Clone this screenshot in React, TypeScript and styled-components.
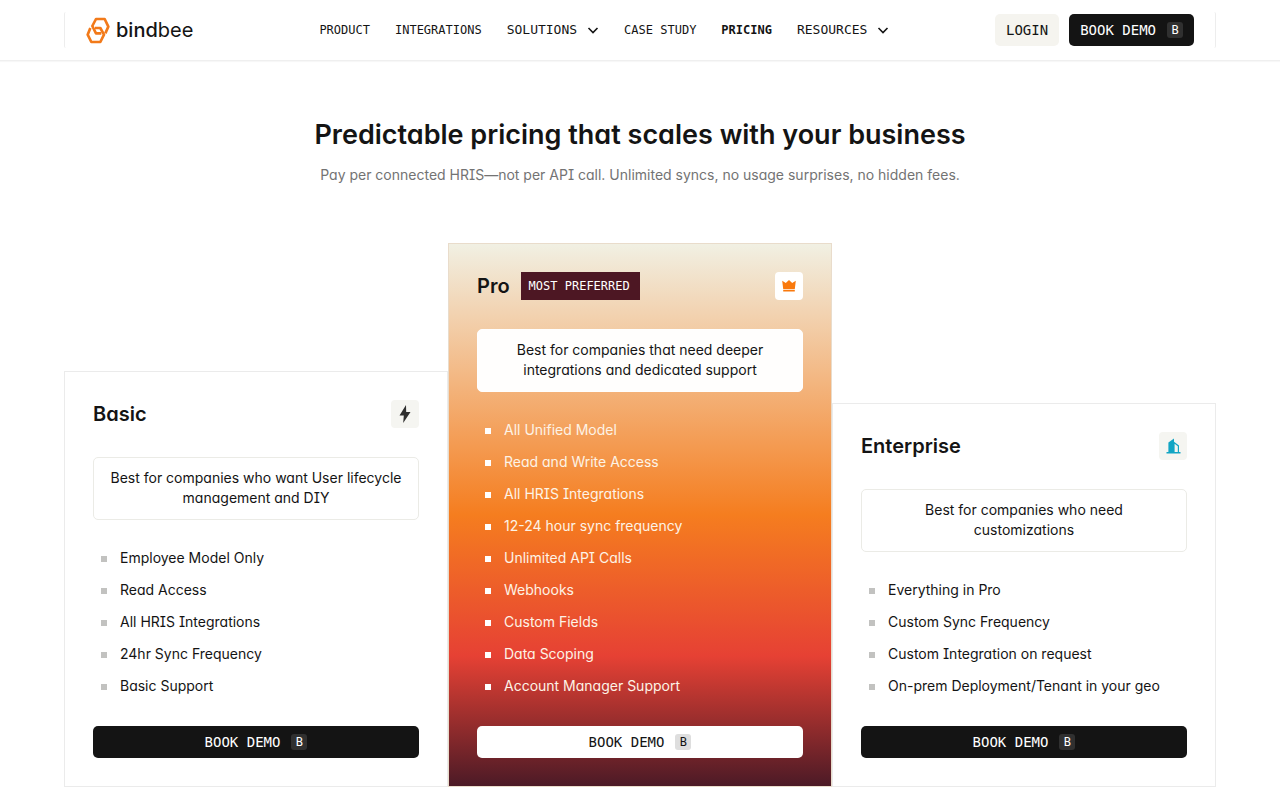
import React from "react";
import styled, { createGlobalStyle } from "styled-components";

const sans = `Inter, "Liberation Sans", sans-serif`;
const mono = `"DejaVu Sans Mono", "Liberation Mono", monospace`;

const GlobalStyle = createGlobalStyle`
  *, *::before, *::after { box-sizing: border-box; }
  body {
    margin: 0;
    background: #fff;
    color: #141414;
    font-family: ${sans};
    font-size: 14px;
    line-height: 20px;
    font-feature-settings: "cv11" 1, "cv08" 1;
  }
  h1, h2, p, ul { margin: 0; padding: 0; }
  a { color: inherit; text-decoration: none; }
  button { font: inherit; color: inherit; border: 0; background: none; padding: 0; cursor: pointer; }
`;

const Header = styled.header`
  padding: 12px 64px;
  background: #fff;
  border-bottom: 1px solid #efefef;
  box-shadow: 0 1px 1px #f7f7f7;
`;

const HeaderInner = styled.div`
  display: flex;
  align-items: center;
  height: 36px;
  padding: 0 21px;
  border: solid #ededed;
  border-width: 0 1px;
  border-radius: 2px;
`;

const Logo = styled.a`
  display: flex;
  align-items: center;
  gap: 6px;
  margin-right: 126px;
  font-size: 20px;
  line-height: 28px;
`;

const WordStrong = styled.span`
  font-weight: 500;
`;

const Nav = styled.nav`
  display: flex;
  align-items: center;
  gap: 25px;
  font-family: ${mono};
  font-size: 12px;
`;

const NavLink = styled.a<{ $active?: boolean }>`
  font-weight: ${(p) => (p.$active ? 700 : 400)};
`;

const NavMenu = styled.button`
  display: flex;
  align-items: center;
  gap: 10px;
  font-size: 13px;
`;

const Actions = styled.div`
  display: flex;
  gap: 10px;
  margin-left: auto;
`;

const Button = styled.button<{ $tone: "dark" | "light" | "soft"; $wide?: boolean }>`
  display: flex;
  align-items: center;
  justify-content: center;
  gap: 11px;
  width: ${(p) => (p.$wide ? "100%" : "auto")};
  height: 32px;
  padding: 0 11px;
  border-radius: 5px;
  font-family: ${mono};
  font-size: 14px;
  color: ${(p) => (p.$tone === "dark" ? "#fff" : "#141414")};
  background: ${(p) => ({ dark: "#141414", light: "#fff", soft: "#f5f4ef" })[p.$tone]};
`;

const Key = styled.kbd<{ $light?: boolean }>`
  width: 16px;
  border-radius: 3px;
  font-family: ${mono};
  font-size: 12px;
  line-height: 16px;
  text-align: center;
  background: ${(p) => (p.$light ? "#dedede" : "#303030")};
`;

const Main = styled.main`
  padding: 54px 64px 13px;
`;

const Intro = styled.section`
  text-align: center;
`;

const Title = styled.h1`
  font-size: 27px;
  line-height: 40px;
  font-weight: 600;
`;

const Subtitle = styled.p`
  margin-top: 10px;
  color: #737373;
`;

const Plans = styled.section`
  display: grid;
  grid-template-columns: repeat(3, 1fr);
  align-items: end;
  margin-top: 58px;
`;

const Card = styled.article<{ $featured?: boolean }>`
  padding: 28px;
  border: 1px solid ${(p) => (p.$featured ? "#e9dccb" : "#ebebeb")};
  color: ${(p) => (p.$featured ? "#fdf3e6" : "#141414")};
  background: ${(p) =>
    p.$featured
      ? "linear-gradient(180deg, #f1f0e3 0%, #f57d1f 50%, #e64134 76%, #4c1a26 100%)"
      : "#fff"};
`;

const CardHead = styled.div`
  display: flex;
  align-items: center;
  gap: 11px;
  height: 28px;
  color: #141414;
`;

const PlanName = styled.h2`
  font-size: 20px;
  line-height: 28px;
  font-weight: 600;
`;

const Tag = styled.span`
  padding: 0 10px 0 8px;
  font-family: ${mono};
  font-size: 12px;
  line-height: 28px;
  color: #fff;
  background: #4d1723;
`;

const IconTile = styled.span<{ $featured?: boolean }>`
  display: grid;
  place-items: center;
  width: 28px;
  height: 28px;
  margin-left: auto;
  border-radius: 4px;
  background: ${(p) => (p.$featured ? "#fff" : "#f5f5f1")};
`;

const BestFor = styled.p<{ $featured?: boolean }>`
  margin-top: 29px;
  padding: 10px 14px 11px;
  border: 1px solid ${(p) => (p.$featured ? "#fff" : "#ebebe6")};
  border-radius: 5px;
  color: #141414;
  background: ${(p) => (p.$featured ? "#fffefd" : "#fff")};
  text-align: center;
`;

const Features = styled.ul`
  margin: 22px 0 24px;
  list-style: none;
`;

const Feature = styled.li<{ $featured?: boolean }>`
  display: flex;
  align-items: center;
  gap: 13px;
  height: 32px;
  padding-left: 8px;

  &::before {
    content: "";
    width: 6px;
    height: 6px;
    margin-top: 2px;
    background: ${(p) => (p.$featured ? "#fff" : "#c2c2c0")};
  }
`;

const LogoMark = () => (
  <svg width="24" height="27" viewBox="0 0 72 81" fill="none" stroke="#f27a1a" strokeWidth="8" strokeLinejoin="round" aria-hidden="true">
    <path d="M58 49 L67 29 L56 6 H30 L19 27 L30 49 H46" />
    <path d="M13 33 L5 53 L16 75 H43 L54 53 L43 33 H27" />
  </svg>
);

const Chevron = () => (
  <svg width="12" height="12" viewBox="0 0 12 12" fill="none" stroke="#141414" strokeWidth="1.6" aria-hidden="true">
    <path d="M1.5 4 L6 8.5 L10.5 4" />
  </svg>
);

const Bolt = () => (
  <svg width="12" height="18" viewBox="0 0 12 18" fill="#2e2e2e" aria-hidden="true">
    <path d="M7 0 L0.5 10.5 H4.8 L4.2 18 L11.5 7 H7.2 Z" />
  </svg>
);

const Crown = () => (
  <svg width="14" height="12" viewBox="0 0 14 12" fill="#f9790d" aria-hidden="true">
    <path d="M0.2 0.8 L3.8 3 L7 0 L10.2 3 L13.8 0.8 L12.8 9 H1.2 Z M1.2 9.8 H12.8 V11.6 H1.2 Z" />
  </svg>
);

const Tower = () => (
  <svg width="15" height="16" viewBox="0 0 15 16" fill="#12a5c4" aria-hidden="true">
    <path d="M0.5 14 H2.4 V4.4 L8 0.4 V3.8 L13 7.6 V14 H14.5 V15.4 H0.5 Z M8.6 5.8 V14 H11.8 V8.2 Z" fillRule="evenodd" />
  </svg>
);

interface Plan {
  name: string;
  tag?: string;
  featured?: boolean;
  icon: React.ReactNode;
  bestFor: string;
  features: string[];
}

const plans: Plan[] = [
  {
    name: "Basic",
    icon: <Bolt />,
    bestFor: "Best for companies who want User lifecycle management and DIY",
    features: ["Employee Model Only", "Read Access", "All HRIS Integrations", "24hr Sync Frequency", "Basic Support"],
  },
  {
    name: "Pro",
    tag: "MOST PREFERRED",
    featured: true,
    icon: <Crown />,
    bestFor: "Best for companies that need deeper integrations and dedicated support",
    features: [
      "All Unified Model",
      "Read and Write Access",
      "All HRIS Integrations",
      "12-24 hour sync frequency",
      "Unlimited API Calls",
      "Webhooks",
      "Custom Fields",
      "Data Scoping",
      "Account Manager Support",
    ],
  },
  {
    name: "Enterprise",
    icon: <Tower />,
    bestFor: "Best for companies who need customizations",
    features: ["Everything in Pro", "Custom Sync Frequency", "Custom Integration on request", "On-prem Deployment/Tenant in your geo"],
  },
];

const PlanCard = ({ plan }: { plan: Plan }) => (
  <Card $featured={plan.featured}>
    <CardHead>
      <PlanName>{plan.name}</PlanName>
      {plan.tag && <Tag>{plan.tag}</Tag>}
      <IconTile $featured={plan.featured}>{plan.icon}</IconTile>
    </CardHead>
    <BestFor $featured={plan.featured}>{plan.bestFor}</BestFor>
    <Features>
      {plan.features.map((f) => (
        <Feature key={f} $featured={plan.featured}>{f}</Feature>
      ))}
    </Features>
    <Button $wide $tone={plan.featured ? "light" : "dark"}>
      BOOK DEMO <Key $light={plan.featured}>B</Key>
    </Button>
  </Card>
);

export default function App() {
  return (
    <>
      <GlobalStyle />
      <Header>
        <HeaderInner>
          <Logo href="#">
            <LogoMark />
            <span><WordStrong>bind</WordStrong>bee</span>
          </Logo>
          <Nav>
            <NavLink href="#">PRODUCT</NavLink>
            <NavLink href="#">INTEGRATIONS</NavLink>
            <NavMenu>SOLUTIONS <Chevron /></NavMenu>
            <NavLink href="#">CASE STUDY</NavLink>
            <NavLink href="#" $active>PRICING</NavLink>
            <NavMenu>RESOURCES <Chevron /></NavMenu>
          </Nav>
          <Actions>
            <Button $tone="soft">LOGIN</Button>
            <Button $tone="dark">BOOK DEMO <Key>B</Key></Button>
          </Actions>
        </HeaderInner>
      </Header>
      <Main>
        <Intro>
          <Title>Predictable pricing that scales with your business</Title>
          <Subtitle>Pay per connected HRIS—not per API call. Unlimited syncs, no usage surprises, no hidden fees.</Subtitle>
        </Intro>
        <Plans>
          {plans.map((p) => (
            <PlanCard key={p.name} plan={p} />
          ))}
        </Plans>
      </Main>
    </>
  );
}
